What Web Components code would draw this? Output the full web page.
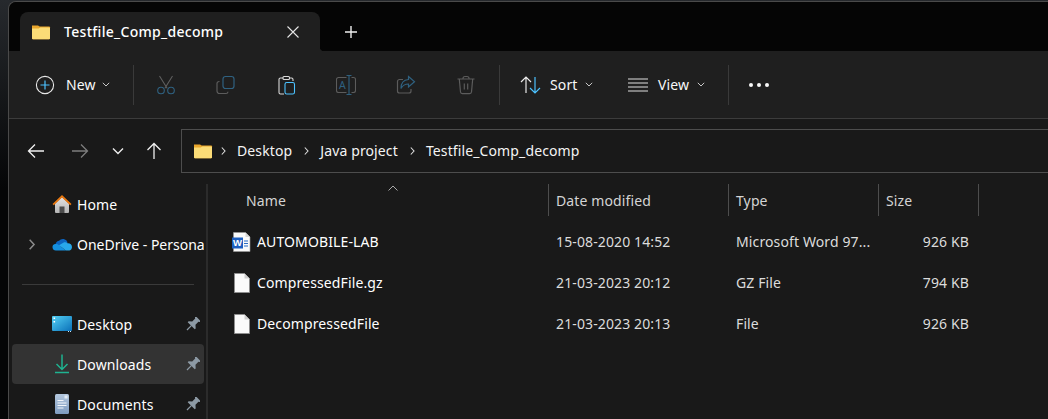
<!DOCTYPE html>
<html>
<head>
<meta charset="utf-8">
<title>Testfile_Comp_decomp</title>
<style>
html, body { margin: 0; height: 419px; overflow: hidden; background: linear-gradient(#26292d, #050607 45%); }
body { font: 14px "Noto Sans", "Open Sans", sans-serif; letter-spacing: .12px; color: #fff; }
</style>
</head>
<body>
<explorer-window>
	<title-bar slot="title" label="Testfile_Comp_decomp"></title-bar>
	<command-bar slot="commands"></command-bar>
	<nav-bar slot="nav"></nav-bar>
	<side-nav slot="side">
		<side-item icon="home">Home</side-item>
		<side-item icon="cloud" expander style="letter-spacing:0">OneDrive - Persona</side-item>
		<side-rule></side-rule>
		<side-item icon="desktop" pinned>Desktop</side-item>
		<side-item icon="downloads" pinned selected>Downloads</side-item>
		<side-item icon="documents" pinned>Documents</side-item>
	</side-nav>
	<file-list slot="files">
		<file-row icon="word" name="AUTOMOBILE-LAB" date="15-08-2020 14:52" type="Microsoft Word 97..." size="926 KB"></file-row>
		<file-row icon="blank" name="CompressedFile.gz" date="21-03-2023 20:12" type="GZ File" size="794 KB"></file-row>
		<file-row icon="blank" name="DecompressedFile" date="21-03-2023 20:13" type="File" size="926 KB"></file-row>
	</file-list>
</explorer-window>

<script>
const icons = {
	folder: `<svg viewBox="0 0 20 20" width="20" height="20"><path d="M1 3.500h6.200l2 2H1z" fill="#e9a62c"/><path d="M1 4.500h17.200a.8.8 0 0 1 .8.8v11a1 1 0 0 1-1 1H2a1 1 0 0 1-1-1z" fill="#e9a62c"/><path d="M1 6.600h6.600l1.800-1.200h8.800a.8.8 0 0 1 .8.8v10.100a1 1 0 0 1-1 1H2a1 1 0 0 1-1-1z" fill="#fbdc77"/></svg>`,
	close: `<svg viewBox="0 0 16 16" width="16" height="16"><path d="M2.500 2.500l11 11M13.500 2.500l-11 11" stroke="#e4e4e4" stroke-width="1.100" fill="none"/></svg>`,
	plus: `<svg viewBox="0 0 16 16" width="16" height="16"><path d="M8 2v12M2 8h12" stroke="#f0f0f0" stroke-width="1.400" fill="none"/></svg>`,
	newItem: `<svg viewBox="0 0 20 20" width="20" height="20"><circle cx="10" cy="10" r="8.600" fill="none" stroke="#e8e8e8" stroke-width="1.100"/><path d="M10 5.500v9M5.500 10h9" stroke="#4cc2ff" stroke-width="1.200" fill="none"/></svg>`,
	cut: `<svg viewBox="0 0 20 20" width="20" height="20" fill="none" stroke-width="1.100"><path d="M3.500 1l7.600 12.200M16.500 1L8.900 13.200" stroke="#5f5f5f"/><circle cx="5" cy="15.500" r="3.300" stroke="#2f6180"/><circle cx="15" cy="15.500" r="3.300" stroke="#2f6180"/></svg>`,
	copy: `<svg viewBox="0 0 20 20" width="20" height="20" fill="none" stroke-width="1.200"><path d="M3.500 6.500h-.5a2 2 0 0 0-2 2v7.500a2.500 2.500 0 0 0 2.500 2.500h6.500a2 2 0 0 0 2-1.800" stroke="#5c5c5c"/><rect x="7" y="1.500" width="11" height="12" rx="2.500" stroke="#2f6180"/></svg>`,
	paste: `<svg viewBox="0 0 20 20" width="20" height="20" fill="none" stroke-width="1.100"><path d="M7 3H4.500A1.500 1.500 0 0 0 3 4.500v13A1.500 1.500 0 0 0 4.500 19H8M14 3h1.500A1.500 1.500 0 0 1 17 4.500V6" stroke="#d8d8d8"/><rect x="7" y="1.500" width="6.500" height="3" rx="1" stroke="#d8d8d8"/><rect x="9" y="7.500" width="9.500" height="11.500" rx="1.800" stroke="#4cc2ff"/></svg>`,
	rename: `<svg viewBox="0 0 20 20" width="20" height="20" fill="none" stroke-width="1.100"><path d="M10.500 2.500h-8a2 2 0 0 0-2 2v11a2 2 0 0 0 2 2h8M15.500 2.500h2a2 2 0 0 1 2 2v11a2 2 0 0 1-2 2h-2" stroke="#5c5c5c"/><path d="M13 .5v19M10.500 .5h5M10.500 19.500h5" stroke="#2f6180"/><text x="6.300" y="14" text-anchor="middle" font-size="10.500" font-family="Noto Sans" fill="#2f6180" stroke="none">A</text></svg>`,
	share: `<svg viewBox="0 0 20 20" width="20" height="20" fill="none" stroke-width="1.200"><path d="M7 4.500H3.500a2 2 0 0 0-2 2v9.500a2 2 0 0 0 2 2h9.500a2 2 0 0 0 2-2v-2" stroke="#5c5c5c"/><path d="M12.500 1.500l6 5.300-6 5.200V9c-3.500 0-6 1.500-7.500 4.500C5 8 8 4.800 12.500 4.500z" stroke="#2f6180"/></svg>`,
	trash: `<svg viewBox="0 0 20 20" width="20" height="20" fill="none" stroke="#5c5c5c" stroke-width="1.200"><path d="M1.500 4h17M7 4V3a2 2 0 0 1 2-1.500h2A2 2 0 0 1 13 3v1M3.300 4l1.200 13a1.800 1.800 0 0 0 1.800 1.600h7.400a1.800 1.800 0 0 0 1.800-1.600L16.700 4M8.300 8.500v6M11.700 8.500v6"/></svg>`,
	sort: `<svg viewBox="0 0 22 20" width="22" height="20" fill="none" stroke-width="1.200"><path d="M6 18V2M1 7l5-5 5 5" stroke="#eaeaea"/><path d="M15 2v16M10 13l5 5 5-5" stroke="#4cc2ff"/></svg>`,
	view: `<svg viewBox="0 0 20 14" width="20" height="14" stroke="#e0e0e0" stroke-width="1.100"><path d="M0 1h20M0 5h20M0 9h20M0 13h20"/></svg>`,
	dots: `<svg viewBox="0 0 20 4" width="20" height="4" fill="#f8f8f8"><circle cx="2" cy="2" r="2"/><circle cx="10" cy="2" r="2"/><circle cx="18" cy="2" r="2"/></svg>`,
	chevron: `<svg viewBox="0 0 8 5" width="8" height="5"><path d="M.8.800L4 4 7.200.800" fill="none" stroke="#c8c8c8" stroke-width="1"/></svg>`,
	crumb: `<svg viewBox="0 0 5 8" width="5" height="8"><path d="M.8.500L4 4 .8 7.500" fill="none" stroke="#e0e0e0" stroke-width="1.100"/></svg>`,
	back: `<svg viewBox="0 0 18 16" width="18" height="16"><path d="M17 8H1.500M8 1.500L1.500 8 8 14.500" fill="none" stroke="#f0f0f0" stroke-width="1.300"/></svg>`,
	forward: `<svg viewBox="0 0 18 16" width="18" height="16"><path d="M1 8h15.500M10 1.500L16.500 8 10 14.500" fill="none" stroke="#7d7d7d" stroke-width="1.300"/></svg>`,
	recent: `<svg viewBox="0 0 12 8" width="12" height="8"><path d="M1 1.500L6 6.500l5-5" fill="none" stroke="#ececec" stroke-width="1.400"/></svg>`,
	up: `<svg viewBox="0 0 16 18" width="16" height="18"><path d="M8 17V1.500M1.500 8L8 1.500 14.500 8" fill="none" stroke="#f0f0f0" stroke-width="1.300"/></svg>`,
	home: `<svg viewBox="0 0 20 20" width="20" height="20"><defs><linearGradient id="hb" x1="0" y1="0" x2="0" y2="1"><stop offset="0" stop-color="#e4e4e4"/><stop offset="1" stop-color="#b4b4b4"/></linearGradient></defs><path d="M3 9.500L10 3l7 6.500V18a1 1 0 0 1-1 1H4a1 1 0 0 1-1-1z" fill="url(#hb)"/><path d="M7.500 19v-6.500h5V19z" fill="#4c4c4c"/><path d="M.500 10L10 1l9.500 9-1.300 1.300L10 3.600 1.800 11.300z" fill="#e8770f"/></svg>`,
	cloud: `<svg viewBox="0 0 20 14" width="20" height="14"><path d="M3.500 8.500A4 4 0 0 1 7 3.800 5 5 0 0 1 15.700 5.500L8 10z" fill="#0c64c0"/><path d="M3.800 13.500A3.300 3.300 0 0 1 3 7c1.800-.3 3 .2 4 1.200l7 5.300z" fill="#1490df"/><path d="M7 8.200l4.300-2.500c1.500-.7 3-.5 4.200.500 2.500-.300 4.500 1.500 4.500 3.800 0 1.500-.8 3-2.500 3.500H14z" fill="#28a8ea"/></svg>`,
	desktop: `<svg viewBox="0 0 20 16" width="20" height="16"><defs><linearGradient id="dg" x1="0" y1="0" x2="1" y2="1"><stop offset="0" stop-color="#54d0f4"/><stop offset="1" stop-color="#0a70b8"/></linearGradient></defs><rect width="20" height="15" rx="1" fill="url(#dg)"/><path d="M1.500 1.500h1.600v1.600H1.500zM1.500 5h1.600v1.600H1.500z" fill="#fff"/><path d="M16 15.500h1M18 15.500h1" stroke="#cfe6f5"/></svg>`,
	downloads: `<svg viewBox="0 0 20 20" width="20" height="20" fill="none" stroke="#1fb391" stroke-width="1.500"><path d="M10 .5v15M4.500 10l5.500 5.500 5.500-5.500M3 18.500h14"/></svg>`,
	documents: `<svg viewBox="0 0 14 20" width="14" height="20"><defs><linearGradient id="db" x1="0" y1="0" x2="0" y2="1"><stop offset="0" stop-color="#b4c8de"/><stop offset="1" stop-color="#7f9cc0"/></linearGradient></defs><rect width="14" height="20" rx="1.500" fill="url(#db)"/><rect x="9.500" y="1.500" width="3" height="3" fill="#e4ecf4"/><path d="M2.500 6.500h6M2.500 9h9M2.500 11.500h9M2.500 14h6" stroke="#f2f6fa" stroke-width="1"/></svg>`,
	pin: `<svg viewBox="0 0 14 14" width="14" height="14"><g transform="rotate(45 7 7)" fill="#8d9aa5"><path d="M3.500 -.5h7v1.300l-1.200.8v4.200l2.700 2.400v1.300H2v-1.300l2.700-2.400V1.600l-1.200-.8z"/><path d="M6.400 9h1.200v6.500H6.400z"/></g></svg>`,
	word: `<svg viewBox="0 0 20 20" width="20" height="20"><path d="M1.500.500h12L18 5v14.500H1.500z" fill="#fafafa" stroke="#9a9a9a" stroke-width=".6"/><path d="M13.500.500V5H18" fill="#d5d5d5"/><path d="M12 9h4M12 11.500h4M12 14h4" stroke="#2b6cc4"/><rect y="5.500" width="11" height="11" fill="#1d5fc0"/><text x="5.500" y="14.300" text-anchor="middle" font-size="9.500" font-weight="700" font-family="Liberation Sans" fill="#fff">W</text></svg>`,
	blank: `<svg viewBox="0 0 16 20" width="16" height="20"><path d="M.500.500h10L15.500 5.500v14H.500z" fill="#fafafa" stroke="#8e8e8e"/><path d="M10.500.500v5h5" fill="#cfcfcf"/></svg>`
}

class ExplorerWindow extends HTMLElement {
	constructor() {
		super()
		this.attachShadow({ mode: 'open' })
		this.shadowRoot.innerHTML = `<style>
		:host { display: grid; grid-template-columns: 199px 1fr; grid-template-rows: auto auto auto 1fr; height: 418px; margin: 1px 0 0 8px; border: 1px solid #4a4a4a; border-width: 1px 0 0 1px; border-top-left-radius: 8px; overflow: hidden; background: #191919; }
		.wide { grid-column: 1 / -1; }
		</style>
		<div class="wide"><slot name="title"></slot></div>
		<div class="wide"><slot name="commands"></slot></div>
		<div class="wide"><slot name="nav"></slot></div>
		<slot name="side"></slot>
		<slot name="files"></slot>`
	}
}

class TitleBar extends HTMLElement {
	constructor() {
		super()
		this.attachShadow({ mode: 'open' })
		this.shadowRoot.innerHTML = `<style>
		:host { display: flex; align-items: flex-end; height: 49px; padding-left: 11px; background: #050505; }
		.tab { position: relative; display: flex; align-items: center; width: 300px; height: 39px; box-sizing: border-box; padding: 0 19px 0 11px; background: #1f1f1f; border-radius: 8px 8px 0 0; }
		.tab::after { content: ""; position: absolute; right: -4px; bottom: 0; width: 4px; height: 4px; background: radial-gradient(circle at 100% 0, transparent 4px, #1f1f1f 4.500px); }
		.label { flex: 1; margin-left: 13px; font-weight: 500; letter-spacing: .3px; color: #fff; white-space: nowrap; }
		svg { display: block; }
		.plus { margin: 0 0 0 23px; padding-bottom: 11px; }
		</style>
		<div class="tab">${icons.folder}<span class="label"></span>${icons.close}</div>
		<div class="plus">${icons.plus}</div>`
		this.shadowRoot.querySelector('.label').innerText = this.getAttribute('label')
	}
}

class CommandBar extends HTMLElement {
	constructor() {
		super()
		this.attachShadow({ mode: 'open' })
		this.shadowRoot.innerHTML = `<style>
		:host { display: flex; align-items: center; height: 67px; padding-left: 16px; background: #1f1f1f; border-bottom: 1px solid #3c3c3c; }
		.btn { display: flex; align-items: center; height: 40px; color: #f8f8f8; white-space: nowrap; }
		.btn svg { display: block; flex: none; }
		.square { width: 60px; justify-content: center; }
		.rule { width: 1px; height: 40px; background: #3a3a3a; }
		.text { margin: 0 6px 0 11px; }
		</style>
		<div class="btn" style="width:98px;padding-left:10px;box-sizing:border-box">${icons.newItem}<span class="text">New</span>${icons.chevron}</div>
		<div class="rule" style="margin:0 2px 0 10px"></div>
		<div class="btn square">${icons.cut}</div>
		<div class="btn square">${icons.copy}</div>
		<div class="btn square">${icons.paste}</div>
		<div class="btn square">${icons.rename}</div>
		<div class="btn square">${icons.share}</div>
		<div class="btn square">${icons.trash}</div>
		<div class="rule" style="margin:0 20px 0 3px"></div>
		<div class="btn" style="width:108px">${icons.sort}<span class="text" style="margin:0 8px">Sort</span>${icons.chevron}</div>
		<div class="btn" style="width:100px">${icons.view}<span class="text" style="margin:0 8px 0 10px">View</span>${icons.chevron}</div>
		<div class="rule" style="margin:0 20px 0 0"></div>
		<div class="btn">${icons.dots}</div>`
	}
}

class NavBar extends HTMLElement {
	constructor() {
		super()
		this.attachShadow({ mode: 'open' })
		this.shadowRoot.innerHTML = `<style>
		:host { display: flex; align-items: flex-start; height: 65px; padding-top: 10px; box-sizing: border-box; background: #191919; }
		.arrows { display: grid; grid-template-columns: 44px 44px 32px 40px; width: 172px; height: 44px; align-items: center; justify-items: center; padding-left: 5px; box-sizing: border-box; }
		svg { display: block; }
		.path { display: flex; align-items: center; flex: 1; height: 44px; box-sizing: border-box; margin-right: -20px; padding: 0 0 1px 11px; border: 1px solid #4d4d4d; color: #f4f4f4; white-space: nowrap; }
		.path svg:first-child { margin-right: 8px; }
		.path span { margin: 0 12px 0 11px; }
		</style>
		<div class="arrows">${icons.back}${icons.forward}${icons.recent}${icons.up}</div>
		<div class="path">${icons.folder}${icons.crumb}<span>Desktop</span>${icons.crumb}<span>Java project</span>${icons.crumb}<span>Testfile_Comp_decomp</span></div>`
	}
}

class SideNav extends HTMLElement {
	constructor() {
		super()
		this.attachShadow({ mode: 'open' })
		this.shadowRoot.innerHTML = `<style>
		:host { display: block; padding-left: 3px; box-sizing: border-box; border-right: 2px solid #2b2b2b; }
		.inner { width: 192px; }
		</style>
		<div class="inner"><slot></slot></div>`
	}
}

class SideItem extends HTMLElement {
	constructor() {
		super()
		this.attachShadow({ mode: 'open' })
		const arrow = this.hasAttribute('expander') ? icons.crumb.replace('#e0e0e0', '#8a8a8a').replace('width="5" height="8"', 'width="8" height="11"') : ''
		const pin = this.hasAttribute('pinned') ? `<div class="pin">${icons.pin}</div>` : ''
		this.shadowRoot.innerHTML = `<style>
		:host { display: grid; grid-template-columns: 40px 20px 1fr; align-items: center; height: 40px; border-radius: 4px; overflow: hidden; white-space: nowrap; color: #fff; }
		:host([pinned]) { grid-template-columns: 40px 20px 1fr 22px; }
		:host([selected]) { background: #333333; }
		.arrow, .icon, .pin { display: flex; align-items: center; justify-content: center; }
		.arrow { padding-right: 1px; }
		svg { display: block; flex: none; }
		.text { margin-left: 5px; overflow: hidden; }
		</style>
		<div class="arrow">${arrow}</div>
		<div class="icon">${icons[this.getAttribute('icon')]}</div>
		<div class="text"><slot></slot></div>
		${pin}`
	}
}

class SideRule extends HTMLElement {
	constructor() {
		super()
		this.attachShadow({ mode: 'open' })
		this.shadowRoot.innerHTML = `<style>
		:host { display: flex; align-items: center; height: 40px; padding: 0 10px; }
		div { flex: 1; height: 1px; background: #3a3a3a; }
		</style><div></div>`
	}
}

const columns = '341px 180px 150px 100px'

class FileList extends HTMLElement {
	constructor() {
		super()
		this.attachShadow({ mode: 'open' })
		this.shadowRoot.innerHTML = `<style>
		:host { display: block; overflow: hidden; }
		.head { position: relative; display: grid; grid-template-columns: ${columns}; height: 32px; margin-bottom: 5px; color: #d4d4d4; }
		.head div { display: flex; align-items: center; padding-left: 7px; border-right: 1px solid #4d4d4d; }
		.head div:first-child { padding-left: 38px; }
		.sort { position: absolute; left: 180px; top: 1px; display: block; }
		</style>
		<div class="head"><div>Name</div><div>Date modified</div><div>Type</div><div>Size</div>
		<svg class="sort" viewBox="0 0 10 6" width="10" height="6"><path d="M.5 5.500L5 1l4.500 4.500" fill="none" stroke="#a8a8a8"/></svg></div>
		<slot></slot>`
	}
}

class FileRow extends HTMLElement {
	constructor() {
		super()
		this.attachShadow({ mode: 'open' })
		this.shadowRoot.innerHTML = `<style>
		:host { display: grid; grid-template-columns: ${columns}; align-items: center; height: 41px; color: #dcdcdc; white-space: nowrap; }
		.name { display: flex; align-items: center; color: #fff; }
		.icon { display: flex; justify-content: center; width: 20px; margin: 0 5px 0 24px; }
		svg { display: block; flex: none; }
		.cell { padding-left: 7px; }
		.size { padding: 0 10px 0 0; text-align: right; }
		</style>
		<div class="name"><div class="icon">${icons[this.getAttribute('icon')]}</div><span>${this.getAttribute('name')}</span></div>
		<div class="cell">${this.getAttribute('date')}</div>
		<div class="cell">${this.getAttribute('type')}</div>
		<div class="cell size">${this.getAttribute('size')}</div>`
	}
}

window.customElements.define('explorer-window', ExplorerWindow)
window.customElements.define('title-bar', TitleBar)
window.customElements.define('command-bar', CommandBar)
window.customElements.define('nav-bar', NavBar)
window.customElements.define('side-nav', SideNav)
window.customElements.define('side-item', SideItem)
window.customElements.define('side-rule', SideRule)
window.customElements.define('file-list', FileList)
window.customElements.define('file-row', FileRow)
</script>
</body>
</html>
